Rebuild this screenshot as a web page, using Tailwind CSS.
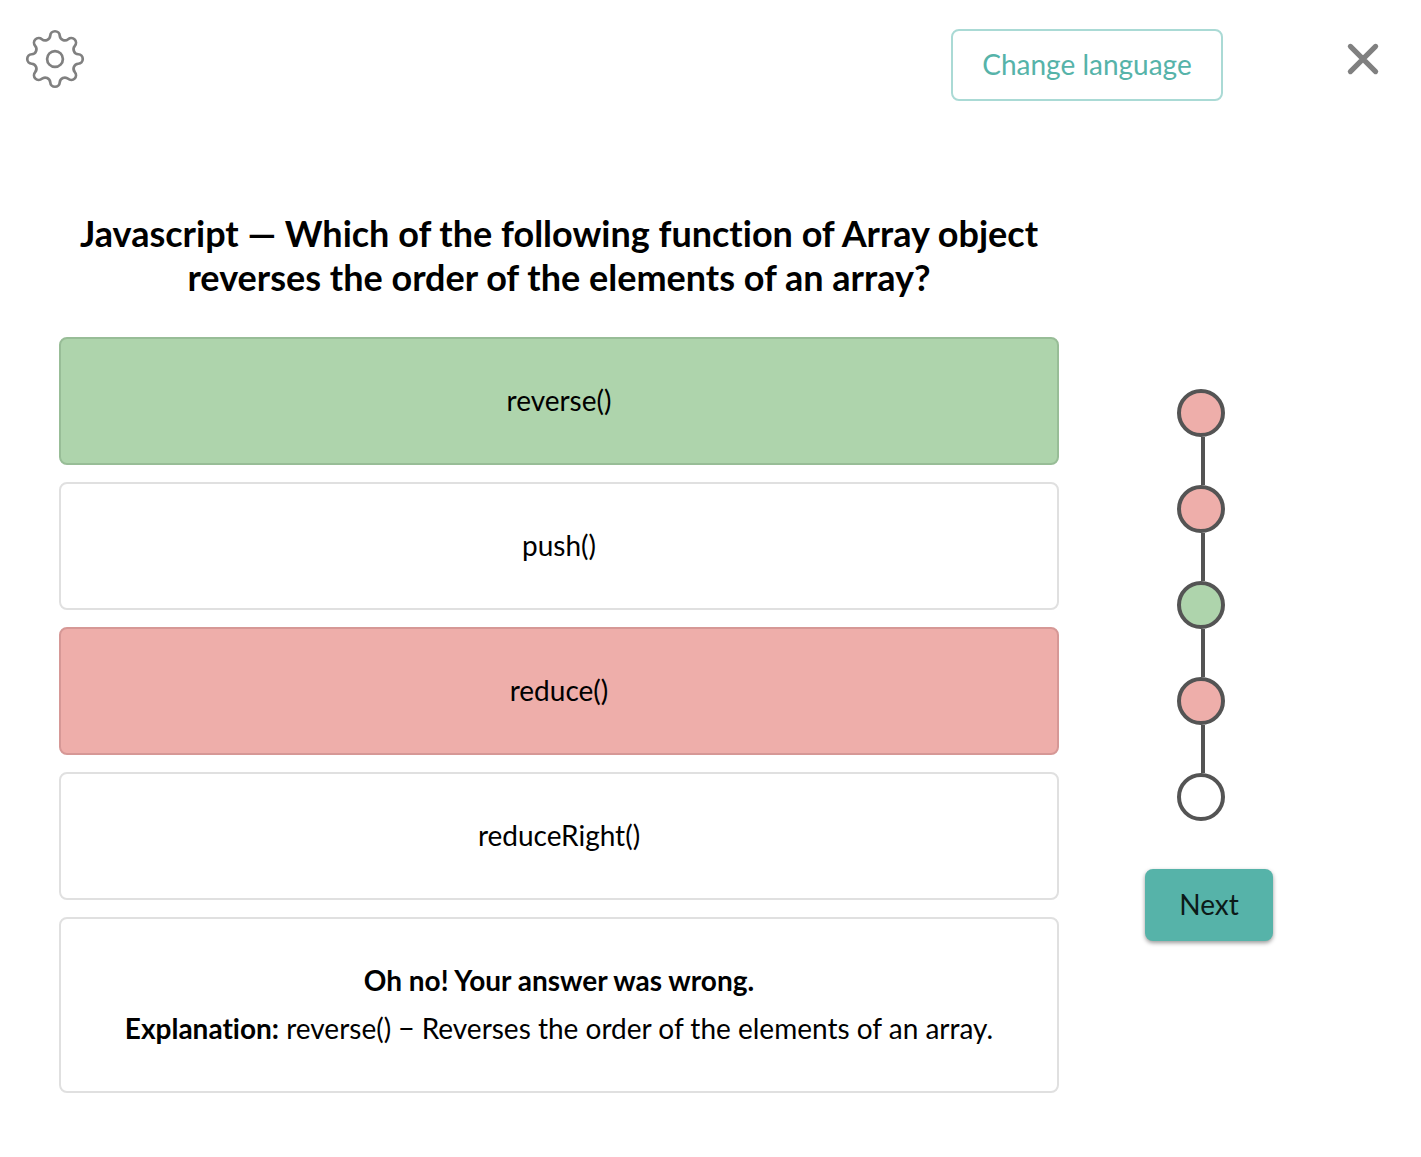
<!DOCTYPE html>
<html lang="en">
<head>
<meta charset="utf-8">
<meta name="viewport" content="width=device-width, initial-scale=1">
<title>Javascript quiz</title>
<script src="https://cdn.jsdelivr.net/npm/@tailwindcss/browser@4"></script>
</head>
<body class="min-h-screen bg-white font-['Lato',sans-serif] text-[28px] leading-10 text-black [font-variant-ligatures:none]">
<header class="flex items-start pt-[29px] pr-10 pl-[25px]">
  <button type="button" aria-label="Settings" class="text-[#808080]">
    <svg class="block size-[60px]" viewBox="-30 -30 60 60" fill="none" stroke="currentColor" stroke-width="2.7">
      <path d="M-4.74-23.31A4.75 4.75 0 0 1 4.74-23.31A5.07 5.07 0 0 0 13.13-19.83A4.75 4.75 0 0 1 19.83-13.13A5.07 5.07 0 0 0 23.31-4.74A4.75 4.75 0 0 1 23.31 4.74A5.07 5.07 0 0 0 19.83 13.13A4.75 4.75 0 0 1 13.13 19.83A5.07 5.07 0 0 0 4.74 23.31A4.75 4.75 0 0 1-4.74 23.31A5.07 5.07 0 0 0-13.13 19.83A4.75 4.75 0 0 1-19.83 13.13A5.07 5.07 0 0 0-23.31 4.74A4.75 4.75 0 0 1-23.31-4.74A5.07 5.07 0 0 0-19.83-13.13A4.75 4.75 0 0 1-13.13-19.83A5.07 5.07 0 0 0-4.74-23.31Z"/>
      <circle r="7.9"/>
    </svg>
  </button>
  <button type="button" class="ml-auto h-[72px] w-[272px] rounded-lg border-2 border-[#aadad5] pb-0.5 text-[#56b3a9]">Change language</button>
  <button type="button" aria-label="Close" class="ml-[122px] text-[#808080]">
    <svg class="block h-[60px] w-9" viewBox="-18 -30 36 60" fill="none" stroke="currentColor" stroke-width="5.2" stroke-linecap="round">
      <path d="M-12.6-12.6L12.6 12.6M12.6-12.6L-12.6 12.6"/>
    </svg>
  </button>
</header>

<div class="flex gap-[86px] pt-[110px] pr-[148px] pb-16 pl-[59px]">
  <main class="min-w-0 flex-1 text-center">
    <h1 class="text-4xl leading-[44px] font-bold">Javascript — Which of the following function of Array object reverses the order of the elements of an array?</h1>
    <div class="mt-[38px] flex flex-col gap-[17px]">
      <button type="button" class="h-32 rounded-lg border-2 border-[#98bd97] bg-[#aed4ac] pb-0.5">reverse()</button>
      <button type="button" class="h-32 rounded-lg border-2 border-[#e0e0e0] pb-0.5">push()</button>
      <button type="button" class="h-32 rounded-lg border-2 border-[#d69896] bg-[#eeaeaa] pb-0.5">reduce()</button>
      <button type="button" class="h-32 rounded-lg border-2 border-[#e0e0e0] pb-0.5">reduceRight()</button>
      <section class="flex flex-col gap-2 rounded-lg border-2 border-[#e0e0e0] px-8 pt-[41px] pb-[43px]">
        <p class="font-bold">Oh no! Your answer was wrong.</p>
        <p><b>Explanation:</b> reverse() − Reverses the order of the elements of an array.</p>
      </section>
    </div>
  </main>

  <aside class="w-32 shrink-0 pt-[178px]">
    <ol class="pl-8" aria-label="Progress">
      <li><div class="size-12 rounded-full border-4 border-[#545454] bg-[#eeaeaa]"></div><div class="ml-6 h-12 w-1 bg-[#545454]"></div></li>
      <li><div class="size-12 rounded-full border-4 border-[#545454] bg-[#eeaeaa]"></div><div class="ml-6 h-12 w-1 bg-[#545454]"></div></li>
      <li><div class="size-12 rounded-full border-4 border-[#545454] bg-[#aed4ac]"></div><div class="ml-6 h-12 w-1 bg-[#545454]"></div></li>
      <li><div class="size-12 rounded-full border-4 border-[#545454] bg-[#eeaeaa]"></div><div class="ml-6 h-12 w-1 bg-[#545454]"></div></li>
      <li><div class="size-12 rounded-full border-4 border-[#545454] bg-white"></div></li>
    </ol>
    <button type="button" class="mt-12 h-[72px] w-full rounded-lg bg-[#56b3a9] pb-0.5 text-[#0c1a18] shadow-[0_2px_4px_rgba(0,0,0,0.4)]">Next</button>
  </aside>
</div>
</body>
</html>
